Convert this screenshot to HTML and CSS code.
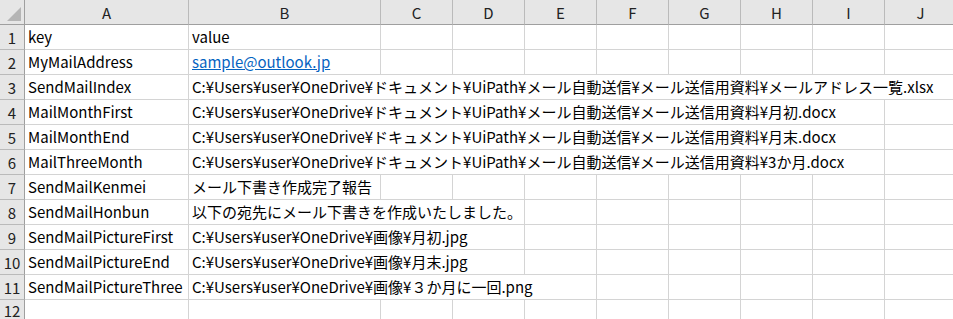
FILE: index.html
```html
<!DOCTYPE html>
<html lang="ja">
<head>
    <meta charset="UTF-8">
    <title>Config</title>
    <link rel="stylesheet" href="styles.css">
</head>
<body>
    <div class="sheet">
        <div class="row head">
            <div class="corner"><span class="tri"></span></div>
            <div class="colh a">A</div>
            <div class="colh b">B</div>
            <div class="colh">C</div>
            <div class="colh">D</div>
            <div class="colh">E</div>
            <div class="colh">F</div>
            <div class="colh">G</div>
            <div class="colh">H</div>
            <div class="colh">I</div>
            <div class="colh">J</div>
        </div>
        <div class="row">
            <div class="num">1</div>
            <div class="cell a">key</div>
            <div class="cell b">value</div>
            <div class="cell"></div><div class="cell"></div><div class="cell"></div><div class="cell"></div>
            <div class="cell"></div><div class="cell"></div><div class="cell"></div><div class="cell"></div>
        </div>
        <div class="row">
            <div class="num">2</div>
            <div class="cell a">MyMailAddress</div>
            <div class="cell b"><span class="link">sample@outlook.jp</span></div>
            <div class="cell"></div><div class="cell"></div><div class="cell"></div><div class="cell"></div>
            <div class="cell"></div><div class="cell"></div><div class="cell"></div><div class="cell"></div>
        </div>
        <div class="row">
            <div class="num">3</div>
            <div class="cell a">SendMailIndex</div>
            <div class="cell span-j">C:¥Users¥user¥OneDrive¥ドキュメント¥UiPath¥メール自動送信¥メール送信用資料¥メールアドレス一覧.xlsx</div>
        </div>
        <div class="row">
            <div class="num">4</div>
            <div class="cell a">MailMonthFirst</div>
            <div class="cell span-i">C:¥Users¥user¥OneDrive¥ドキュメント¥UiPath¥メール自動送信¥メール送信用資料¥月初.docx</div>
            <div class="cell"></div>
        </div>
        <div class="row">
            <div class="num">5</div>
            <div class="cell a">MailMonthEnd</div>
            <div class="cell span-i">C:¥Users¥user¥OneDrive¥ドキュメント¥UiPath¥メール自動送信¥メール送信用資料¥月末.docx</div>
            <div class="cell"></div>
        </div>
        <div class="row">
            <div class="num">6</div>
            <div class="cell a">MailThreeMonth</div>
            <div class="cell span-i">C:¥Users¥user¥OneDrive¥ドキュメント¥UiPath¥メール自動送信¥メール送信用資料¥3か月.docx</div>
            <div class="cell"></div>
        </div>
        <div class="row">
            <div class="num">7</div>
            <div class="cell a">SendMailKenmei</div>
            <div class="cell b">メール下書き作成完了報告</div>
            <div class="cell"></div><div class="cell"></div><div class="cell"></div><div class="cell"></div>
            <div class="cell"></div><div class="cell"></div><div class="cell"></div><div class="cell"></div>
        </div>
        <div class="row">
            <div class="num">8</div>
            <div class="cell a">SendMailHonbun</div>
            <div class="cell span-d">以下の宛先にメール下書きを作成いたしました。</div>
            <div class="cell"></div><div class="cell"></div><div class="cell"></div>
            <div class="cell"></div><div class="cell"></div><div class="cell"></div>
        </div>
        <div class="row">
            <div class="num">9</div>
            <div class="cell a">SendMailPictureFirst</div>
            <div class="cell span-d">C:¥Users¥user¥OneDrive¥画像¥月初.jpg</div>
            <div class="cell"></div><div class="cell"></div><div class="cell"></div>
            <div class="cell"></div><div class="cell"></div><div class="cell"></div>
        </div>
        <div class="row">
            <div class="num">10</div>
            <div class="cell a">SendMailPictureEnd</div>
            <div class="cell span-d">C:¥Users¥user¥OneDrive¥画像¥月末.jpg</div>
            <div class="cell"></div><div class="cell"></div><div class="cell"></div>
            <div class="cell"></div><div class="cell"></div><div class="cell"></div>
        </div>
        <div class="row">
            <div class="num">11</div>
            <div class="cell a">SendMailPictureThree</div>
            <div class="cell span-e">C:¥Users¥user¥OneDrive¥画像¥３か月に一回.png</div>
            <div class="cell"></div><div class="cell"></div>
            <div class="cell"></div><div class="cell"></div><div class="cell"></div>
        </div>
        <div class="row last">
            <div class="num">12</div>
            <div class="cell a"></div>
            <div class="cell b"></div>
            <div class="cell"></div><div class="cell"></div><div class="cell"></div><div class="cell"></div>
            <div class="cell"></div><div class="cell"></div><div class="cell"></div><div class="cell"></div>
        </div>
    </div>
</body>
</html>
```

FILE: styles.css
```css
html, body {
    margin: 0;
    padding: 0;
    background: #fff;
    overflow: hidden;
}
.sheet {
    width: 957px;
    font-family: "Noto Sans CJK JP", "Noto Sans", sans-serif;
    font-size: 15px;
    color: #000;
}
.row {
    display: flex;
    height: 25px;
}
.row > div {
    box-sizing: border-box;
    flex: none;
    height: 25px;
    width: 72px;
    border-right: 1px solid #d4d4d4;
    border-bottom: 1px solid #d4d4d4;
}
.row > .a { width: 164px; }
.row > .b { width: 192px; }
.row > .span-d { width: 336px; }
.row > .span-e { width: 408px; }
.row > .span-i { width: 696px; }
.row > .span-j { width: 768px; }

.head > div {
    background: #e6e6e6;
    border-right: 1px solid #bababa;
    border-bottom: 1px solid #9f9f9f;
    display: flex;
    align-items: center;
    justify-content: center;
    color: #222;
    font-size: 15px;
}
.row > .corner {
    width: 25px;
    border-right: 1px solid #9f9f9f;
    position: relative;
}
.tri {
    position: absolute;
    right: 3px;
    bottom: 3px;
    width: 0;
    height: 0;
    border-left: 14px solid transparent;
    border-bottom: 14px solid #b5b5b5;
}
.row > .num {
    width: 25px;
    background: #e6e6e6;
    border-right: 1px solid #9f9f9f;
    border-bottom: 1px solid #bababa;
    color: #222;
    font-size: 15px;
    display: flex;
    align-items: center;
    justify-content: center;
}
.last > .num {
    align-items: flex-start;
    line-height: 22px;
}
.cell {
    padding: 0 3px;
    white-space: nowrap;
    overflow: hidden;
    line-height: 24px;
}
.link {
    color: #0563c1;
    text-decoration: underline;
}
```
